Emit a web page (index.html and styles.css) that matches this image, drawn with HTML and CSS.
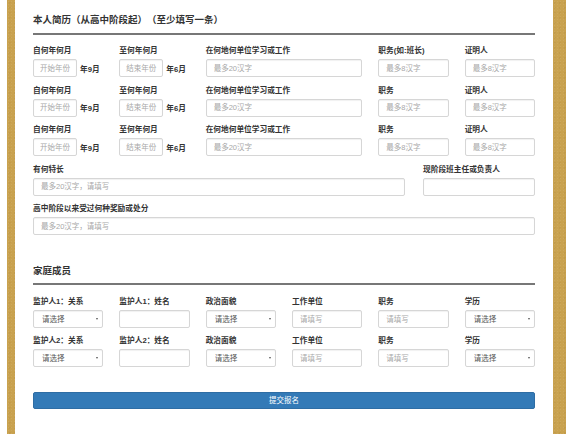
FILE: index.html
```html
<!DOCTYPE html>
<html lang="zh-CN">
<head>
<meta charset="utf-8">
<title>报名表</title>
<link rel="stylesheet" href="styles.css">
</head>
<body>
<div class="sheet">
  <section class="block">
    <h3 class="block-title">本人简历（从高中阶段起）（至少填写一条）</h3>
    <div class="rows">
      <div class="grid6">
        <div class="field"><label>自何年何月</label><div class="inline"><input class="ctl short" placeholder="开始年份"><span class="suffix">年9月</span></div></div>
        <div class="field"><label>至何年何月</label><div class="inline"><input class="ctl short" placeholder="结束年份"><span class="suffix">年6月</span></div></div>
        <div class="field span2"><label>在何地何单位学习或工作</label><input class="ctl" placeholder="最多20汉字"></div>
        <div class="field"><label>职务(如:班长)</label><input class="ctl" placeholder="最多8汉字"></div>
        <div class="field"><label>证明人</label><input class="ctl" placeholder="最多8汉字"></div>
      </div>
      <div class="grid6">
        <div class="field"><label>自何年何月</label><div class="inline"><input class="ctl short" placeholder="开始年份"><span class="suffix">年9月</span></div></div>
        <div class="field"><label>至何年何月</label><div class="inline"><input class="ctl short" placeholder="结束年份"><span class="suffix">年6月</span></div></div>
        <div class="field span2"><label>在何地何单位学习或工作</label><input class="ctl" placeholder="最多20汉字"></div>
        <div class="field"><label>职务</label><input class="ctl" placeholder="最多8汉字"></div>
        <div class="field"><label>证明人</label><input class="ctl" placeholder="最多8汉字"></div>
      </div>
      <div class="grid6">
        <div class="field"><label>自何年何月</label><div class="inline"><input class="ctl short" placeholder="开始年份"><span class="suffix">年9月</span></div></div>
        <div class="field"><label>至何年何月</label><div class="inline"><input class="ctl short" placeholder="结束年份"><span class="suffix">年6月</span></div></div>
        <div class="field span2"><label>在何地何单位学习或工作</label><input class="ctl" placeholder="最多20汉字"></div>
        <div class="field"><label>职务</label><input class="ctl" placeholder="最多8汉字"></div>
        <div class="field"><label>证明人</label><input class="ctl" placeholder="最多8汉字"></div>
      </div>
      <div class="split">
        <div class="field"><label>有何特长</label><input class="ctl" placeholder="最多20汉字，请填写"></div>
        <div class="field"><label>现阶段班主任或负责人</label><input class="ctl"></div>
      </div>
      <div class="field"><label>高中阶段以来受过何种奖励或处分</label><input class="ctl" placeholder="最多20汉字，请填写"></div>
    </div>
  </section>

  <section class="block family">
    <h3 class="block-title">家庭成员</h3>
    <div class="rows tight">
      <div class="grid6">
        <div class="field"><label>监护人1：关系</label><div class="select"><select class="ctl sel"><option>请选择</option></select></div></div>
        <div class="field"><label>监护人1：姓名</label><input class="ctl"></div>
        <div class="field"><label>政治面貌</label><div class="select"><select class="ctl sel"><option>请选择</option></select></div></div>
        <div class="field"><label>工作单位</label><input class="ctl" placeholder="请填写"></div>
        <div class="field"><label>职务</label><input class="ctl" placeholder="请填写"></div>
        <div class="field"><label>学历</label><div class="select"><select class="ctl sel"><option>请选择</option></select></div></div>
      </div>
      <div class="grid6">
        <div class="field"><label>监护人2：关系</label><div class="select"><select class="ctl sel"><option>请选择</option></select></div></div>
        <div class="field"><label>监护人2：姓名</label><input class="ctl"></div>
        <div class="field"><label>政治面貌</label><div class="select"><select class="ctl sel"><option>请选择</option></select></div></div>
        <div class="field"><label>工作单位</label><input class="ctl" placeholder="请填写"></div>
        <div class="field"><label>职务</label><input class="ctl" placeholder="请填写"></div>
        <div class="field"><label>学历</label><div class="select"><select class="ctl sel"><option>请选择</option></select></div></div>
      </div>
    </div>
  </section>

  <button class="submit" type="button">提交报名</button>
</div>
</body>
</html>
```

FILE: styles.css
```css
html {
  background: #ffffff;
}
body {
  margin: 0 0 0 7px;
  min-height: 100vh;
  background: #c9a24f;
  background-image: radial-gradient(rgba(255,255,255,0.08) 1px, transparent 1px), radial-gradient(rgba(120,80,20,0.08) 1px, transparent 1px);
  background-size: 3px 3px, 5px 5px;
  font-family: "Liberation Sans", "Noto Sans CJK SC", sans-serif;
  color: #333;
}
.sheet {
  margin-left: 8px;
  width: 538px;
  min-height: 100vh;
  box-sizing: border-box;
  background: #ffffff;
  padding: 13px 18px 0 18px;
}
.block-title {
  margin: 0 0 11px 0;
  padding-bottom: 6px;
  border-bottom: 2px solid #777;
  font-size: 9.5px;
  line-height: 14px;
  font-weight: 700;
  color: #333;
  text-spacing-trim: space-all;
}
.family {
  margin-top: 29px;
}
.family .block-title {
  padding-bottom: 5px;
  margin-bottom: 12px;
}
.rows {
  display: flex;
  flex-direction: column;
  gap: 8.5px;
}
.rows.tight {
  gap: 8px;
}
.grid6 {
  display: grid;
  grid-template-columns: repeat(6, 1fr);
  column-gap: 16px;
}
.span2 {
  grid-column: span 2;
}
.split {
  display: grid;
  grid-template-columns: 372px 1fr;
  column-gap: 18px;
}
.field {
  display: flex;
  flex-direction: column;
  min-width: 0;
}
.field label {
  display: block;
  font-size: 7.7px;
  line-height: 10px;
  font-weight: 700;
  color: #333;
  margin-bottom: 3px;
  white-space: nowrap;
}
.inline {
  display: flex;
  align-items: center;
  gap: 3px;
}
.suffix {
  font-size: 7.7px;
  font-weight: 700;
  color: #333;
  white-space: nowrap;
}
.ctl {
  display: block;
  box-sizing: border-box;
  width: 100%;
  height: 18px;
  margin: 0;
  padding: 0 7px;
  border: 1px solid #d6d6d6;
  border-radius: 2px;
  background: #fff;
  box-shadow: inset 0 1px 1px rgba(0,0,0,0.06);
  font-family: "Liberation Sans", "Noto Sans CJK SC", sans-serif;
  font-size: 7.5px;
  color: #555;
  outline: none;
}
.ctl::placeholder {
  color: #a8a8a8;
}
.ctl.short {
  width: 44px;
  flex: none;
  padding: 0 2px 0 6px;
}
.select {
  position: relative;
}
.sel {
  -webkit-appearance: none;
  appearance: none;
  padding-left: 8px;
  color: #555;
}
.select::after {
  content: "";
  position: absolute;
  right: 5px;
  top: 8px;
  border-left: 1.5px solid transparent;
  border-right: 1.5px solid transparent;
  border-top: 2.5px solid #555;
}
.submit {
  display: block;
  width: 100%;
  height: 17px;
  margin-top: 25px;
  padding: 0;
  border: 1px solid #2e6da4;
  border-radius: 2px;
  background: #337ab7;
  color: #fff;
  font-family: "Liberation Sans", "Noto Sans CJK SC", sans-serif;
  font-size: 7.5px;
  line-height: 15px;
  cursor: pointer;
}
```
